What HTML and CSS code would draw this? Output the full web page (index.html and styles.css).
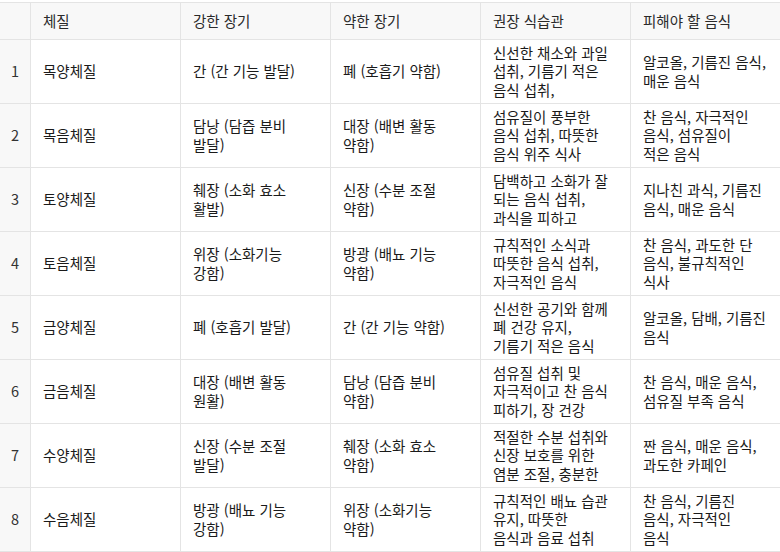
FILE: index.html
```html
<!DOCTYPE html>
<html lang="ko">
<head>
<meta charset="utf-8">
<title>체질 표</title>
<link rel="stylesheet" href="styles.css">
</head>
<body>
<div class="wrap">
  <div class="grid">
    <div class="cell head idx"></div>
    <div class="cell head">체질</div>
    <div class="cell head">강한 장기</div>
    <div class="cell head">약한 장기</div>
    <div class="cell head">권장 식습관</div>
    <div class="cell head">피해야 할 음식</div>

    <div class="cell idx">1</div>
    <div class="cell"><span class="txt">목양체질</span></div>
    <div class="cell"><span class="txt">간 (간 기능 발달)</span></div>
    <div class="cell"><span class="txt">폐 (호흡기 약함)</span></div>
    <div class="cell"><span class="txt">신선한 채소와 과일<br>섭취, 기름기 적은<br>음식 섭취,</span></div>
    <div class="cell"><span class="txt">알코올, 기름진 음식,<br>매운 음식</span></div>

    <div class="cell idx">2</div>
    <div class="cell"><span class="txt">목음체질</span></div>
    <div class="cell"><span class="txt">담낭 (담즙 분비<br>발달)</span></div>
    <div class="cell"><span class="txt">대장 (배변 활동<br>약함)</span></div>
    <div class="cell"><span class="txt">섬유질이 풍부한<br>음식 섭취, 따뜻한<br>음식 위주 식사</span></div>
    <div class="cell"><span class="txt">찬 음식, 자극적인<br>음식, 섬유질이<br>적은 음식</span></div>

    <div class="cell idx">3</div>
    <div class="cell"><span class="txt">토양체질</span></div>
    <div class="cell"><span class="txt">췌장 (소화 효소<br>활발)</span></div>
    <div class="cell"><span class="txt">신장 (수분 조절<br>약함)</span></div>
    <div class="cell"><span class="txt">담백하고 소화가 잘<br>되는 음식 섭취,<br>과식을 피하고</span></div>
    <div class="cell"><span class="txt">지나친 과식, 기름진<br>음식, 매운 음식</span></div>

    <div class="cell idx">4</div>
    <div class="cell"><span class="txt">토음체질</span></div>
    <div class="cell"><span class="txt">위장 (소화기능<br>강함)</span></div>
    <div class="cell"><span class="txt">방광 (배뇨 기능<br>약함)</span></div>
    <div class="cell"><span class="txt">규칙적인 소식과<br>따뜻한 음식 섭취,<br>자극적인 음식</span></div>
    <div class="cell"><span class="txt">찬 음식, 과도한 단<br>음식, 불규칙적인<br>식사</span></div>

    <div class="cell idx">5</div>
    <div class="cell"><span class="txt">금양체질</span></div>
    <div class="cell"><span class="txt">폐 (호흡기 발달)</span></div>
    <div class="cell"><span class="txt">간 (간 기능 약함)</span></div>
    <div class="cell"><span class="txt">신선한 공기와 함께<br>폐 건강 유지,<br>기름기 적은 음식</span></div>
    <div class="cell"><span class="txt">알코올, 담배, 기름진<br>음식</span></div>

    <div class="cell idx">6</div>
    <div class="cell"><span class="txt">금음체질</span></div>
    <div class="cell"><span class="txt">대장 (배변 활동<br>원활)</span></div>
    <div class="cell"><span class="txt">담낭 (담즙 분비<br>약함)</span></div>
    <div class="cell"><span class="txt">섬유질 섭취 및<br>자극적이고 찬 음식<br>피하기, 장 건강</span></div>
    <div class="cell"><span class="txt">찬 음식, 매운 음식,<br>섬유질 부족 음식</span></div>

    <div class="cell idx">7</div>
    <div class="cell"><span class="txt">수양체질</span></div>
    <div class="cell"><span class="txt">신장 (수분 조절<br>발달)</span></div>
    <div class="cell"><span class="txt">췌장 (소화 효소<br>약함)</span></div>
    <div class="cell"><span class="txt">적절한 수분 섭취와<br>신장 보호를 위한<br>염분 조절, 충분한</span></div>
    <div class="cell"><span class="txt">짠 음식, 매운 음식,<br>과도한 카페인</span></div>

    <div class="cell idx">8</div>
    <div class="cell"><span class="txt">수음체질</span></div>
    <div class="cell"><span class="txt">방광 (배뇨 기능<br>강함)</span></div>
    <div class="cell"><span class="txt">위장 (소화기능<br>약함)</span></div>
    <div class="cell"><span class="txt">규칙적인 배뇨 습관<br>유지, 따뜻한<br>음식과 음료 섭취</span></div>
    <div class="cell"><span class="txt">찬 음식, 기름진<br>음식, 자극적인<br>음식</span></div>
  </div>
</div>
</body>
</html>
```
FILE: styles.css
```css
html, body {
  margin: 0;
  padding: 0;
  background: #ffffff;
}
body {
  font-family: "Noto Sans CJK KR", "Noto Sans", sans-serif;
  font-size: 14.5px;
  color: #1a1a1a;
}
.wrap {
  padding-top: 2px;
  width: 780px;
}
.grid {
  display: grid;
  grid-template-columns: 31px 150px 150px 150px 150px 149px;
  grid-template-rows: 37px;
  grid-auto-rows: 64px;
  border-top: 1px solid #e4e4e4;
}
.cell {
  display: flex;
  align-items: center;
  padding: 0 12px;
  border-right: 1px solid #e4e4e4;
  border-bottom: 1px solid #e4e4e4;
  line-height: 18.5px;
  white-space: nowrap;
}
.cell:nth-child(6n) {
  border-right: none;
}
.head {
  background: #f8f8f8;
  color: #2a2a2a;
}
.idx {
  justify-content: center;
  padding: 0;
  background: #f8f8f8;
  color: #333333;
}
.txt {
  display: block;
}
```
